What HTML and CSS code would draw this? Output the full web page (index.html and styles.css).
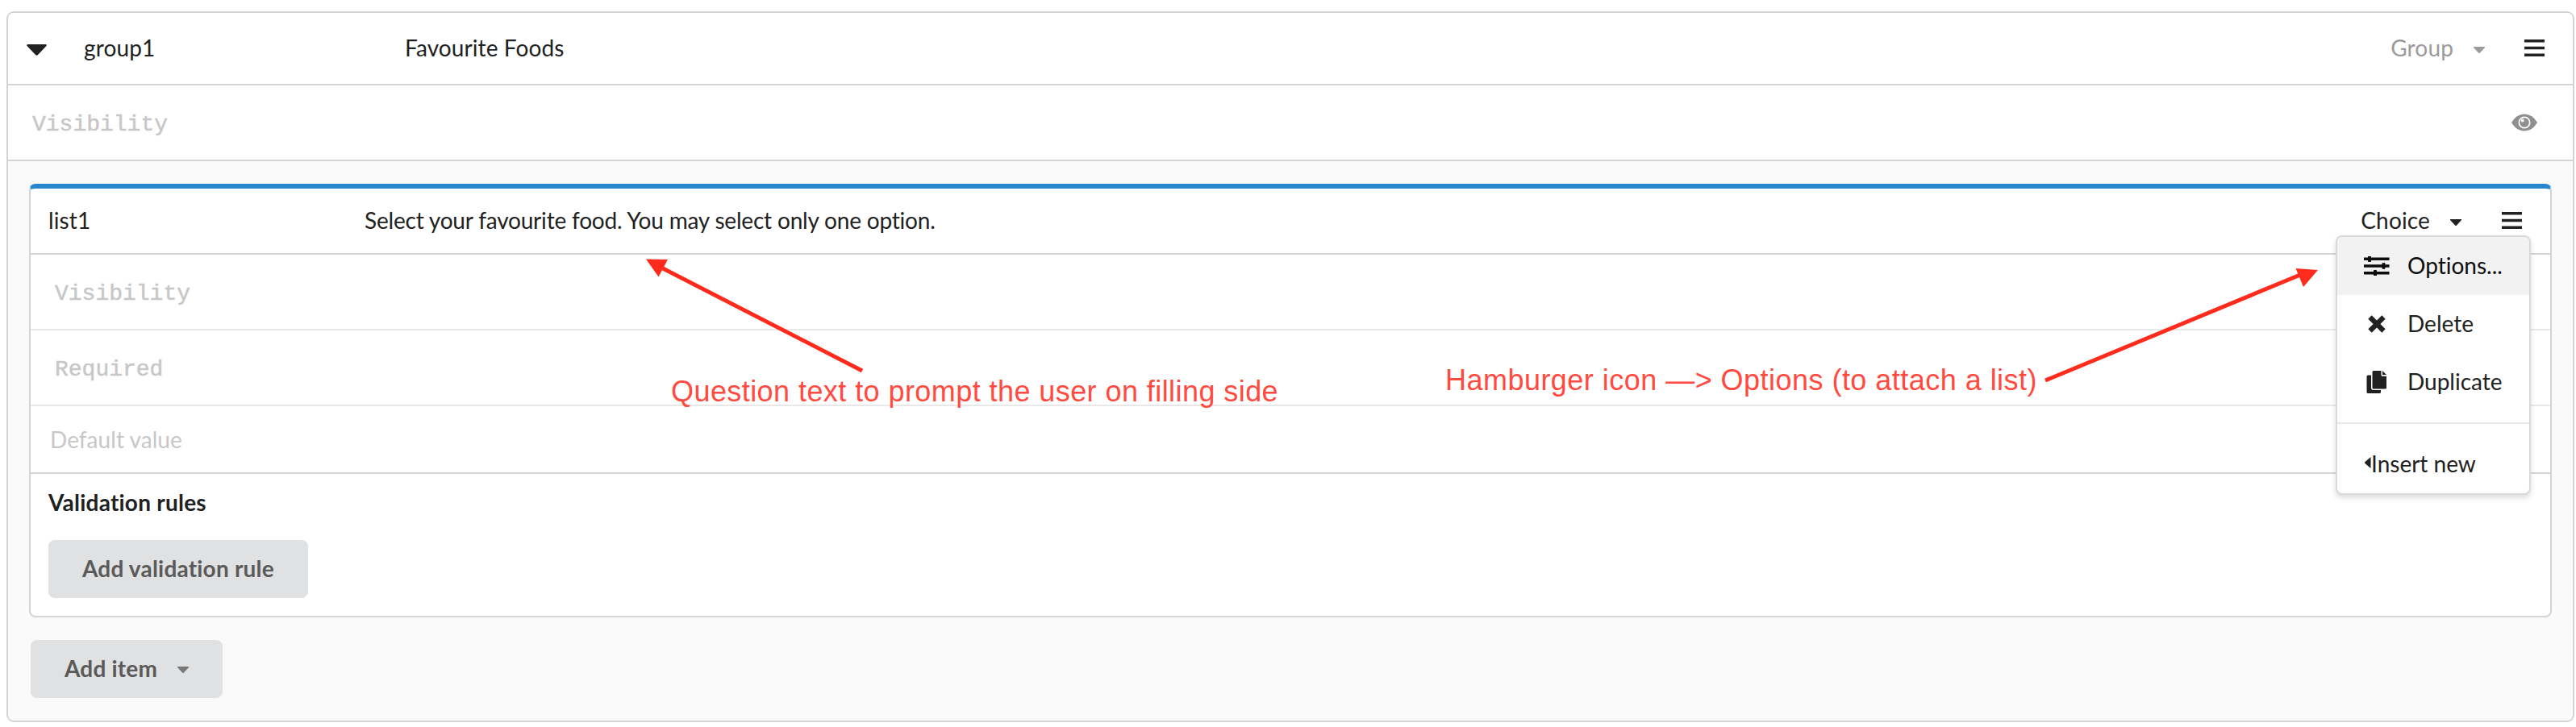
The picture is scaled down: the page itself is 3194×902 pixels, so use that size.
FILE: index.html
```html
<!DOCTYPE html>
<html lang="en">
<head>
<meta charset="utf-8">
<title>Form editor</title>
<link rel="stylesheet" href="styles.css">
</head>
<body>
<main class="group">
  <header class="group-head">
    <svg class="toggle" viewBox="0 0 25 14"><path d="M2 0H23Q26 0 24 2.500L14 13Q12.500 14.500 11 13L1 2.500Q-1 0 2 0Z"/></svg>
    <span class="group-id">group1</span>
    <span class="group-label">Favourite Foods</span>
    <span class="type muted">Group</span>
    <svg class="caret muted" viewBox="0 0 14 8"><path d="M0 0H14V1L8 7.500Q7 8.500 6 7.500L0 1Z"/></svg>
    <svg class="burger" viewBox="0 0 25 24"><path d="M0 1H25V4.500H0ZM0 9.800H25V13.300H0ZM0 18.600H25V22.100H0Z"/></svg>
  </header>
  <div class="group-vis"><span class="mono">Visibility</span>
    <svg class="eye" viewBox="0 0 32 22"><path fill-rule="evenodd" d="M0 11Q6 0.500 16 0.500T32 11Q26 21.500 16 21.500T0 11Z"/><circle cx="16" cy="11" r="6.700" fill="none" stroke="#fff" stroke-width="1.700"/><circle cx="13.700" cy="8.500" r="2" fill="#fff"/></svg>
  </div>
  <section class="body">
    <article class="card">
      <header class="card-head">
        <span class="item-id">list1</span>
        <span class="item-label">Select your favourite food. You may select only one option.</span>
        <span class="type">Choice</span>
        <svg class="caret" viewBox="0 0 14 8"><path d="M0 0H14V1L8 7.500Q7 8.500 6 7.500L0 1Z"/></svg>
        <svg class="burger" viewBox="0 0 25 24"><path d="M0 1H25V4.500H0ZM0 9.800H25V13.300H0ZM0 18.600H25V22.100H0Z"/></svg>
      </header>
      <div class="field"><span class="mono">Visibility</span></div>
      <div class="field"><span class="mono">Required</span></div>
      <div class="field default">Default value</div>
      <div class="rules">
        <h2>Validation rules</h2>
        <button class="btn validate">Add validation rule</button>
      </div>
      <nav class="menu">
        <div class="entry active"><svg viewBox="0 0 32 24"><path d="M0 1.500H31.500V5H0ZM0 10.200H31.500V13.700H0ZM0 19H31.500V22.500H0Z"/><path d="M5.500 0H8.500V6.500H5.500ZM23 8.700H26V15.200H23ZM12.500 17.500H15.500V24H12.500Z" stroke="#0d0d0d"/></svg><span>Options...</span></div>
        <div class="entry"><svg viewBox="0 0 32 24"><path d="M7.500 3.500L24.500 20.500M24.500 3.500L7.500 20.500" stroke="#212121" stroke-width="6.200"/></svg><span>Delete</span></div>
        <div class="entry"><svg viewBox="0 0 32 30"><path d="M3.500 8Q3.500 6.500 5 6.500H9V22Q9 25 12 25H21V27.500Q21 29 19.500 29H5Q3.500 29 3.500 27.500Z"/><path d="M12 1H21.500V6.500Q21.500 7.700 23 7.700H28V22Q28 23.500 26.500 23.500H12Q10.500 23.500 10.500 22V2.500Q10.500 1 12 1ZM23 1L28 6H23Z"/></svg><span>Duplicate</span></div>
        <hr>
        <div class="entry insert"><svg viewBox="0 0 8 14"><path d="M8 0V14L1 8Q-.5 7 1 6Z"/></svg><span>Insert new</span></div>
      </nav>
    </article>
    <button class="btn add"><span>Add item</span><svg class="caret" viewBox="0 0 14 8"><path d="M0 0H14V1L8 7.500Q7 8.500 6 7.500L0 1Z"/></svg></button>
  </section>
</main>
<svg class="arrows" viewBox="0 0 3194 902"><path class="shaft" d="M1069 460L818 331M2536 472L2852 341"/><path d="M801 321.500L828 322L816.500 343.500ZM2874 335L2846.500 333L2856 356Z"/></svg>
<p class="note note-question">Question text to prompt the user on filling side</p>
<p class="note note-menu">Hamburger icon —&gt; Options (to attach a list)</p>
</body>
</html>
```
FILE: styles.css
```css
* { box-sizing: border-box; }
body {
  margin: 0;
  padding: 14px 2px 0 8px;
  height: 902px;
  position: relative;
  overflow: hidden;
  background: #fff;
  color: #212121;
  font: 28px/40px Lato, sans-serif;
  font-variant-ligatures: none;
}
svg { display: block; fill: currentColor; flex: none; }
.group {
  height: 882px;
  border: 2px solid #d4d4d5;
  border-radius: 9px;
  background: #fafafa;
  overflow: hidden;
}
.group-head {
  height: 90px;
  display: flex;
  align-items: center;
  padding: 0 35px 0 23px;
  background: #fff;
  border-bottom: 2px solid #d4d4d5;
}
.group-head span, .card-head span, .entry span { padding-bottom: 2px; }
.toggle { width: 25px; height: 14px; margin-top: 3px; }
.group-id { margin-left: 46px; width: 398px; letter-spacing: .15px; }
.group-label, .item-label { flex: 1; }
.group-label { letter-spacing: .1px; }
.item-label { letter-spacing: -.19px; }
.type { letter-spacing: .15px; }
.caret { width: 14px; height: 8px; margin: 3px 0 0 25px; }
.burger { width: 25px; height: 24px; margin-left: 49px; }
.muted { color: #9b9b9b; }
.group-vis {
  height: 94px;
  display: flex;
  align-items: center;
  justify-content: space-between;
  padding: 0 44px 0 30px;
  background: #fff;
  border-bottom: 2px solid #d4d4d5;
}
.mono {
  padding-top: 5px;
  color: #c7c7c7;
  font: 28px/40px "Liberation Mono", monospace;
  -webkit-text-stroke: .5px #c7c7c7;
}
.eye { width: 32px; height: 22px; color: #8f8f8f; }
.body { padding: 28px 26px 0; }
.card {
  height: 538px;
  position: relative;
  background: #fff;
  border: 2px solid #d4d4d5;
  border-top: 6px solid #2987cd;
  border-radius: 8px;
}
.card-head {
  height: 82px;
  display: flex;
  align-items: center;
  padding: 0 35px 0 22px;
  border-bottom: 2px solid #d4d4d5;
}
.card-head .burger { margin-left: 50px; }
.item-id { width: 392px; letter-spacing: .1px; }
.field {
  height: 94px;
  padding: 0 30px;
  display: flex;
  align-items: center;
  border-bottom: 2px solid #e8e8e9;
}
.default {
  height: 84px;
  padding: 0 24px;
  color: #c7c7c7;
  border-color: #d4d4d5;
  letter-spacing: .05px;
}
.rules { padding: 15px 22px; }
h2 { margin: 0 0 27px; font: bold 28px/40px Lato, sans-serif; letter-spacing: .23px; }
.btn {
  display: flex;
  align-items: center;
  height: 72px;
  padding: 0 0 2px 42px;
  border: 0;
  border-radius: 8px;
  background: #e0e1e2;
  color: #5a5a5a;
  font: bold 28px/40px Lato, sans-serif;
  letter-spacing: .2px;
  white-space: nowrap;
}
.validate { width: 322px; }
.add { width: 238px; margin: 28px 0 0 2px; }
.add .caret { margin-left: 25px; color: #777; }
.menu {
  position: absolute;
  top: 58px;
  right: 24px;
  width: 242px;
  height: 322px;
  background: #fff;
  border: 2px solid #d9d9da;
  border-radius: 8px;
  box-shadow: 0 4px 6px rgba(34, 36, 38, .15);
  overflow: hidden;
}
.entry {
  height: 72px;
  display: flex;
  align-items: center;
  gap: 22px;
  padding-left: 33px;
}
.entry svg { width: 32px; }
.active { background: #f2f2f2; color: #0d0d0d; }
hr { margin: 14px 0; border: 0; border-top: 2px solid #e8e8e9; }
.insert { gap: 0; }
.insert svg { width: 9px; height: 14px; margin-top: -4px; }
.arrows {
  position: absolute;
  inset: 0;
  width: 3194px;
  height: 902px;
  fill: #ff2b1c;
}
.shaft { stroke: #ff2b1c; stroke-width: 5; }
.note {
  position: absolute;
  margin: 0;
  color: #ff4a40;
  font: 36px/44px "Liberation Sans", sans-serif;
  letter-spacing: .43px;
  white-space: nowrap;
}
.note-question { left: 832px; top: 464px; }
.note-menu { left: 1792px; top: 450px; letter-spacing: .47px; }
```
